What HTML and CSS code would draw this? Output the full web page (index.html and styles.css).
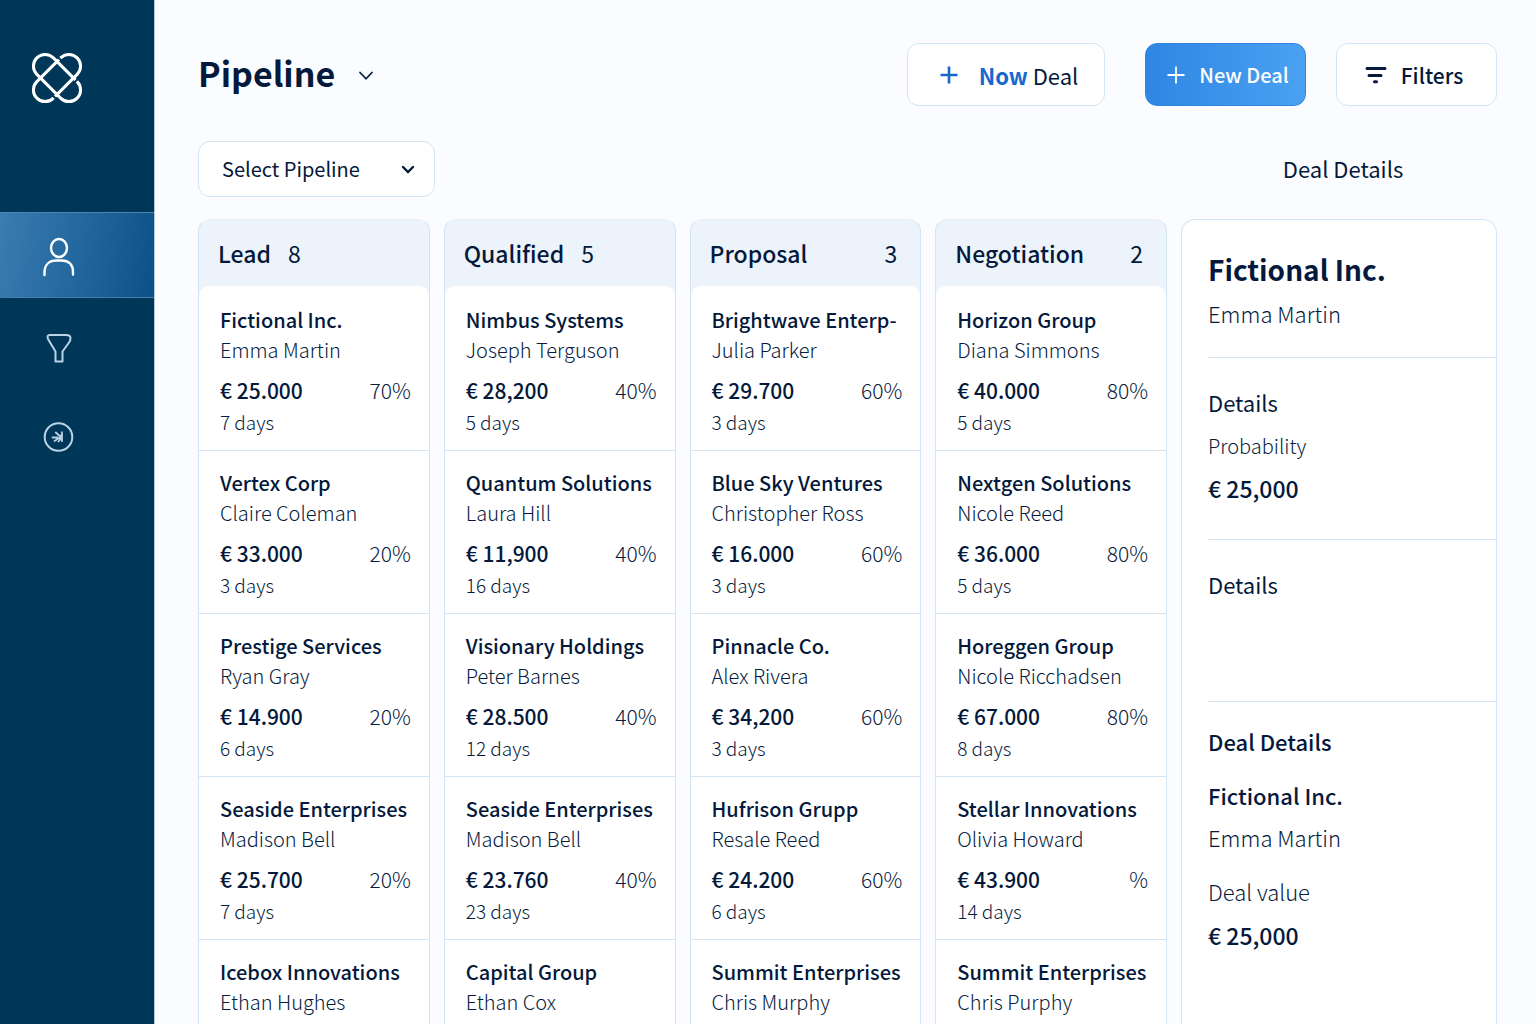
FILE: index.html
```html
<!DOCTYPE html>
<html lang="en">
<head>
<meta charset="utf-8">
<meta name="viewport" content="width=device-width, initial-scale=1">
<title>Pipeline</title>
<link rel="stylesheet" href="styles.css">
</head>
<body>
<div class="app">
  <aside class="sidebar">
    <a class="logo" href="#" aria-label="Home">
      <svg width="52" height="52" viewBox="-26 -26 52 52" fill="none">
        <g stroke="#fff" stroke-width="3">
          <rect x="-28.5" y="-11.7" width="57" height="23.4" rx="11.7" transform="rotate(-45)"/>
          <rect x="-28.5" y="-11.7" width="57" height="23.4" rx="11.7" transform="rotate(45)"/>
        </g>
        <g stroke="#003658" stroke-width="2">
          <path d="M.6-21.200 5-16.800M-.6 21.200-5 16.800M21.200.6 16.800 5"/>
        </g>
      </svg>
    </a>
    <nav class="nav" aria-label="Main">
      <a class="nav-item active" href="#" aria-label="Contacts">
        <svg width="36" height="44" viewBox="41 233 36 44" fill="none" stroke="#fff" stroke-width="2.4" stroke-linecap="round">
          <ellipse cx="59" cy="248" rx="8" ry="9"/>
          <path d="M44.5 275v-2.500C44.500 264.500 49.500 260.500 56 260.500h5.500c7 0 11.500 4 11.500 11.500v2.500"/>
        </svg>
      </a>
      <a class="nav-item" href="#" aria-label="Filter">
        <svg width="36" height="36" viewBox="41 328 36 36" fill="none" stroke="#b9d3e4" stroke-width="2" stroke-linejoin="round">
          <path d="M49.500 335h16.500q4.500 0 4.500 3.200 0 2.300-1.500 4.300L62.500 351.500V361.500H55.500V351.500L48.300 339.500Q46.300 335.500 49.500 335Z"/>
        </svg>
      </a>
      <a class="nav-item" href="#" aria-label="Activity">
        <svg width="36" height="36" viewBox="41 419 36 36" fill="none" stroke="#b9d3e4" stroke-width="2" stroke-linecap="round">
          <circle cx="58.500" cy="437" r="13.800"/>
          <path d="M62 432.200v9M52.500 437.500h5M55.800 432.500l4.500 4M54.500 441l5.500-3.500M58.500 441.500l2.500-3M60 437l2-3" stroke-width="1.800"/>
        </svg>
      </a>
    </nav>
  </aside>

  <main class="main">
    <header class="topbar">
      <h1 class="title">Pipeline</h1>
      <button class="title-toggle" type="button" aria-label="Switch view">
        <svg width="16" height="10" viewBox="0 0 16 10" fill="none" stroke="#0a1f44" stroke-width="1.800" stroke-linecap="round"><path d="M2 1.500 8 7.800 14 1.500"/></svg>
      </button>
      <div class="actions">
        <button class="btn btn-now" type="button">
          <svg width="18" height="18" viewBox="0 0 18 18" stroke="#1767cf" stroke-width="2.600"><path d="M9 .5v17M.5 9h17"/></svg>
          <span><strong>Now</strong> Deal</span>
        </button>
        <button class="btn btn-primary" type="button">
          <svg width="18" height="18" viewBox="0 0 18 18" stroke="#fff" stroke-width="1.800"><path d="M9 .5v17M.5 9h17"/></svg>
          <span>New Deal</span>
        </button>
        <button class="btn btn-filters" type="button">
          <svg width="22" height="18" viewBox="0 0 22 18" fill="none" stroke="#04193b" stroke-width="3" stroke-linecap="round"><path d="M2 2.500h18M4 9.500h12M9.500 15.800h2"/></svg>
          <span>Filters</span>
        </button>
      </div>
    </header>

    <div class="subbar">
      <div class="picker">
        <select class="picker-select" aria-label="Select Pipeline">
          <option>Select Pipeline</option>
        </select>
        <svg class="picker-icon" width="14" height="10" viewBox="0 0 14 10" fill="none" stroke="#04193b" stroke-width="2.400" stroke-linecap="round"><path d="M2 2l5 5 5-5"/></svg>
      </div>
      <h2 class="panel-heading">Deal Details</h2>
    </div>

    <div class="board">
      <section class="column">
        <header class="column-head"><h2>Lead</h2><span>8</span></header>
        <div class="cards">
          <article class="card"><h3>Fictional Inc.</h3><p>Emma Martin</p><div class="deal"><b>€ 25.000</b><span>70%</span></div><p class="age">7 days</p></article>
          <article class="card"><h3>Vertex Corp</h3><p>Claire Coleman</p><div class="deal"><b>€ 33.000</b><span>20%</span></div><p class="age">3 days</p></article>
          <article class="card"><h3>Prestige Services</h3><p>Ryan Gray</p><div class="deal"><b>€ 14.900</b><span>20%</span></div><p class="age">6 days</p></article>
          <article class="card"><h3>Seaside Enterprises</h3><p>Madison Bell</p><div class="deal"><b>€ 25.700</b><span>20%</span></div><p class="age">7 days</p></article>
          <article class="card"><h3>Icebox Innovations</h3><p>Ethan Hughes</p></article>
        </div>
      </section>
      <section class="column">
        <header class="column-head"><h2>Qualified</h2><span>5</span></header>
        <div class="cards">
          <article class="card"><h3>Nimbus Systems</h3><p>Joseph Terguson</p><div class="deal"><b>€ 28,200</b><span>40%</span></div><p class="age">5 days</p></article>
          <article class="card"><h3>Quantum Solutions</h3><p>Laura Hill</p><div class="deal"><b>€ 11,900</b><span>40%</span></div><p class="age">16 days</p></article>
          <article class="card"><h3>Visionary Holdings</h3><p>Peter Barnes</p><div class="deal"><b>€ 28.500</b><span>40%</span></div><p class="age">12 days</p></article>
          <article class="card"><h3>Seaside Enterprises</h3><p>Madison Bell</p><div class="deal"><b>€ 23.760</b><span>40%</span></div><p class="age">23 days</p></article>
          <article class="card"><h3>Capital Group</h3><p>Ethan Cox</p></article>
        </div>
      </section>
      <section class="column">
        <header class="column-head spread"><h2>Proposal</h2><span>3</span></header>
        <div class="cards">
          <article class="card"><h3>Brightwave Enterp-</h3><p>Julia Parker</p><div class="deal"><b>€ 29.700</b><span>60%</span></div><p class="age">3 days</p></article>
          <article class="card"><h3>Blue Sky Ventures</h3><p>Christopher Ross</p><div class="deal"><b>€ 16.000</b><span>60%</span></div><p class="age">3 days</p></article>
          <article class="card"><h3>Pinnacle Co.</h3><p>Alex Rivera</p><div class="deal"><b>€ 34,200</b><span>60%</span></div><p class="age">3 days</p></article>
          <article class="card"><h3>Hufrison Grupp</h3><p>Resale Reed</p><div class="deal"><b>€ 24.200</b><span>60%</span></div><p class="age">6 days</p></article>
          <article class="card"><h3>Summit Enterprises</h3><p>Chris Murphy</p></article>
        </div>
      </section>
      <section class="column">
        <header class="column-head spread"><h2>Negotiation</h2><span>2</span></header>
        <div class="cards">
          <article class="card"><h3>Horizon Group</h3><p>Diana Simmons</p><div class="deal"><b>€ 40.000</b><span>80%</span></div><p class="age">5 days</p></article>
          <article class="card"><h3>Nextgen Solutions</h3><p>Nicole Reed</p><div class="deal"><b>€ 36.000</b><span>80%</span></div><p class="age">5 days</p></article>
          <article class="card"><h3>Horeggen Group</h3><p>Nicole Ricchadsen</p><div class="deal"><b>€ 67.000</b><span>80%</span></div><p class="age">8 days</p></article>
          <article class="card"><h3>Stellar Innovations</h3><p>Olivia Howard</p><div class="deal"><b>€ 43.900</b><span>%</span></div><p class="age">14 days</p></article>
          <article class="card"><h3>Summit Enterprises</h3><p>Chris Purphy</p></article>
        </div>
      </section>

      <aside class="details" aria-label="Deal Details">
        <section class="block block-lead">
          <h2>Fictional Inc.</h2>
          <p>Emma Martin</p>
        </section>
        <section class="block block-value">
          <h3>Details</h3>
          <p class="label">Probability</p>
          <b>€ 25,000</b>
        </section>
        <section class="block block-empty">
          <h3>Details</h3>
        </section>
        <section class="block block-summary">
          <h3>Deal Details</h3>
          <h4>Fictional Inc.</h4>
          <p>Emma Martin</p>
          <p class="caption">Deal value</p>
          <b>€ 25,000</b>
        </section>
      </aside>
    </div>
  </main>
</div>
</body>
</html>
```
FILE: styles.css
```css
:root {
  --ink: #04193b;
  --ink-soft: #061b3e;
  --line: #d3e4f2;
  --navy: #003658;
}

* { box-sizing: border-box; }

body,
h1, h2, h3, h4, p { margin: 0; }

body {
  background: #fbfcff;
  color: var(--ink);
  font-family: "Noto Sans CJK SC", "Noto Sans", sans-serif;
  font-size: 20px;
}

h1, h2, h3, h4, b { font-weight: 500; }

svg { display: block; flex: none; }

button, select {
  font: inherit;
  color: inherit;
}

.app {
  display: grid;
  grid-template-columns: 155px minmax(0, 1fr);
  height: 100vh;
  overflow: hidden;
}

/* Sidebar */
.sidebar {
  background: var(--navy);
  border-right: 1px solid #b9c8d8;
}

.logo {
  display: block;
  height: 212px;
  padding: 52px 31px;
}

.nav {
  display: grid;
  gap: 5px;
}

.nav-item {
  display: flex;
  align-items: center;
  height: 86px;
  padding-left: 41px;
}

.nav-item.active {
  background: linear-gradient(100deg, #3c7cb0, #22679d 50%, #0b5186);
  border-top: 1px solid #4a86b5;
  border-bottom: 1px solid #3f7fae;
}

/* Header */
.main {
  display: flex;
  flex-direction: column;
  min-width: 0;
  padding: 43px 39px 0 43px;
}

.topbar {
  display: flex;
  align-items: center;
}

.title {
  padding-bottom: 4px;
  font-size: 34px;
  font-weight: 700;
  line-height: 58px;
}

.title-toggle {
  margin-left: 23px;
  padding: 2px 0 0;
  border: 0;
  background: none;
}

.actions {
  display: flex;
  gap: 30px;
  margin-left: auto;
}

.btn {
  display: flex;
  align-items: center;
  justify-content: center;
  height: 63px;
  padding: 0;
  border: 1px solid var(--line);
  border-radius: 12px;
  background: #fff;
  font-weight: 500;
  white-space: nowrap;
}

.btn-now {
  gap: 21px;
  width: 198px;
  margin-right: 10px;
  padding-left: 6px;
  font-size: 22px;
  font-weight: 400;
}

.btn-now strong {
  color: #1767cf;
  font-weight: 700;
}

.btn-primary {
  gap: 14px;
  width: 161px;
  padding-left: 5px;
  border-color: #2f86e0;
  background: linear-gradient(90deg, #2f86e3, #4ba1f1);
  color: #fff;
}

.btn-filters {
  gap: 14px;
  width: 161px;
  padding-right: 5px;
  font-size: 21px;
}

.subbar {
  display: flex;
  align-items: center;
  justify-content: space-between;
  margin: 35px 0 22px;
}

.picker {
  position: relative;
  width: 237px;
}

.picker-select {
  display: block;
  width: 100%;
  height: 56px;
  padding: 0 44px 2px 23px;
  border: 1px solid var(--line);
  border-radius: 12px;
  background: #fff;
  appearance: none;
}

.picker-icon {
  position: absolute;
  top: 24px;
  right: 20px;
  pointer-events: none;
}

.panel-heading {
  width: 316px;
  padding: 0 0 2px 8px;
  font-size: 22px;
  font-weight: 400;
  line-height: 30px;
  text-align: center;
}

/* Board */
.board {
  display: grid;
  flex: 1;
  grid-template-columns: repeat(4, minmax(0, 1fr)) 316px;
  gap: 14px;
  min-height: 0;
}

.column {
  border: 1px solid var(--line);
  border-bottom: 0;
  border-top-color: #e8f0f9;
  border-radius: 12px 12px 0 0;
  background: #edf3fa;
}

.column-head {
  display: flex;
  gap: 17px;
  padding: 17px 23px 17px 19px;
  font-size: 23px;
  line-height: 32px;
}

.column-head h2 { font-size: 23px; }

.column-head.spread { justify-content: space-between; }

.cards {
  height: 100%;
  padding-top: 2px;
  border-radius: 10px 10px 0 0;
  background: #fff;
}

.card {
  padding: 17px 18px 12px 21px;
  border-bottom: 1px solid var(--line);
  white-space: nowrap;
}

.card:last-child { border-bottom: 0; }

.card h3 {
  font-size: 20px;
  line-height: 30px;
}

.card p {
  color: var(--ink-soft);
  font-weight: 300;
  line-height: 30px;
}

.deal {
  display: flex;
  justify-content: space-between;
  padding-top: 9px;
  font-size: 21px;
  line-height: 32px;
}

.deal span {
  color: var(--ink-soft);
  font-weight: 300;
}

.card .age {
  font-size: 19px;
  line-height: 32px;
}

/* Details panel */
.details {
  border: 1px solid var(--line);
  border-bottom: 0;
  border-radius: 14px 14px 0 0;
  background: #fff;
  font-size: 22px;
  line-height: 30px;
}

.block {
  display: grid;
  margin-left: 26px;
  border-bottom: 1px solid var(--line);
}

.block h3, .block h4 { font-size: 22px; }

.block p {
  color: var(--ink-soft);
  font-weight: 300;
}

.block b { font-size: 23px; }

.block-lead {
  gap: 11px;
  padding: 31px 0 29px;
}

.block-lead h2 {
  font-size: 28px;
  font-weight: 700;
  line-height: 36px;
}

.block-value {
  gap: 12px;
  padding: 29px 0 36px;
}

.block-value .label {
  padding-top: 2px;
  font-size: 20px;
}

.block-value h3, .block-empty h3 { font-weight: 400; }

.block-empty { padding: 29px 0 102px; }

.block-summary {
  gap: 12px;
  padding-top: 24px;
  border-bottom: 0;
}

.block-summary h4, .block-summary .caption { margin-top: 12px; }

.block-summary b { padding-top: 2px; }
```
